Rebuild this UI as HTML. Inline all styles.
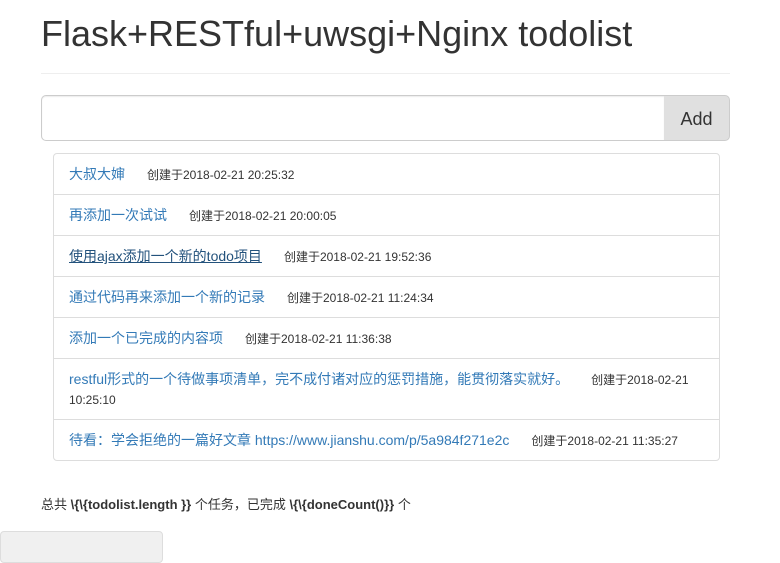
<!DOCTYPE html>
<html><head><meta charset="utf-8"><style>
body{margin:0;background:#fff;font-family:"Liberation Sans","Noto Sans CJK SC",sans-serif;color:#333;width:780px;height:549px;overflow:hidden;position:relative}
h1{position:absolute;left:41px;top:12px;margin:0;font-weight:400;font-size:36px;color:#333;line-height:44px}
.hr{position:absolute;left:41px;top:73px;width:689px;border-top:1px solid #eee}
.inp{position:absolute;left:41px;top:95px;width:622px;height:44px;border:1px solid #ccc;border-right:none;border-radius:5px 0 0 5px;box-shadow:inset 0 1px 1px rgba(0,0,0,.075)}
.btn{position:absolute;left:664px;top:95px;width:66px;height:46px;background:#e0e0e0;border-radius:0 5px 5px 0;font-size:18px;line-height:46px;text-align:center;color:#333;box-sizing:border-box;border:1px solid #ccc;border-left:none}
.list{position:absolute;left:53px;top:153px;width:665px;border:1px solid #ddd;border-radius:4px}
.row{border-top:1px solid #ddd;padding:10px 15px;font-size:14px;line-height:20px}
.row a,.row small{line-height:1}
.row:first-child{border-top:none}
.row a{color:#337ab7;text-decoration:none;margin-right:22px}
.row small{font-size:12px;color:#333}
.foot{position:absolute;left:41px;top:494px;font-size:13px}
.box{position:absolute;left:0;top:531px;width:161px;height:30px;background:#f0f0f0;border:1px solid #ddd;border-radius:4px}
</style></head><body>
<h1>Flask+RESTful+uwsgi+Nginx todolist</h1>
<div class="hr"></div>
<div class="inp"></div>
<div class="btn">Add</div>
<div class="list">
<div class="row"><a>大叔大婶</a><small>创建于2018-02-21 20:25:32</small></div>
<div class="row"><a>再添加一次试试</a><small>创建于2018-02-21 20:00:05</small></div>
<div class="row"><a style="color:#23527c;text-decoration:underline">使用ajax添加一个新的todo项目</a><small>创建于2018-02-21 19:52:36</small></div>
<div class="row"><a>通过代码再来添加一个新的记录</a><small>创建于2018-02-21 11:24:34</small></div>
<div class="row"><a>添加一个已完成的内容项</a><small>创建于2018-02-21 11:36:38</small></div>
<div class="row"><a>restful形式的一个待做事项清单，完不成付诸对应的惩罚措施，能贯彻落实就好。</a><small>创建于2018-02-21 10:25:10</small></div>
<div class="row"><a>待看：学会拒绝的一篇好文章 https://www.jianshu.com/p/5a984f271e2c</a><small>创建于2018-02-21 11:35:27</small></div>
</div>
<div class="foot">总共 <b>\{\{todolist.length }}</b> 个任务，已完成 <b>\{\{doneCount()}}</b> 个</div>
<div class="box"></div>
</body></html>
